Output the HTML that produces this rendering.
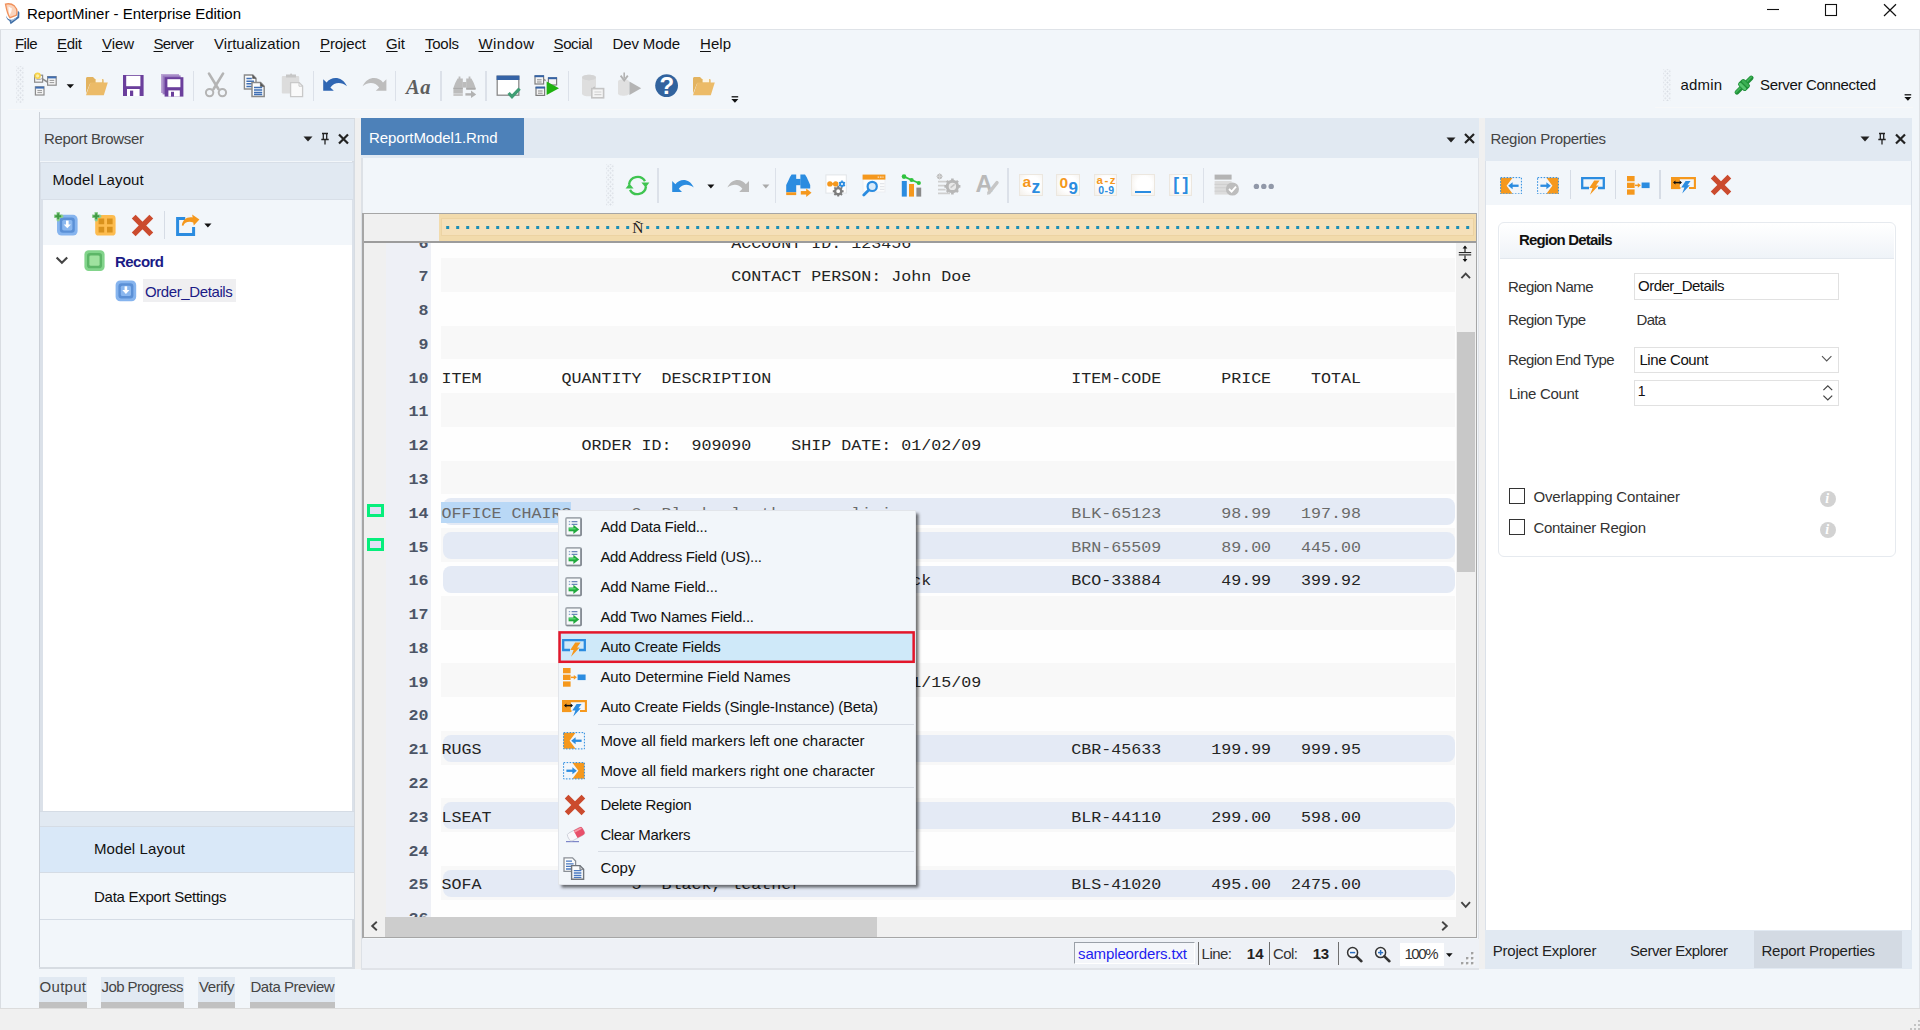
<!DOCTYPE html>
<html lang="en"><head><meta charset="utf-8"><title>ReportMiner - Enterprise Edition</title>
<style>
html,body{margin:0;padding:0;}
body{width:1920px;height:1030px;overflow:hidden;position:relative;background:#f2f6fa;font-family:"Liberation Sans",sans-serif;}
#app{position:absolute;left:0;top:0;width:1920px;height:1030px;overflow:hidden;}
#app div,#app span,#app svg{position:absolute;box-sizing:border-box;}
.t{white-space:pre;line-height:1;}
.m{font-family:"Liberation Mono",monospace;}
.s{font-family:"Liberation Serif",serif;}
u{text-decoration:underline;text-underline-offset:2px;text-decoration-thickness:1.3px;}
</style></head><body><div id="app">
<div style="left:0px;top:0px;width:1920px;height:29px;background:#ffffff;"></div>
<div style="left:0px;top:29px;width:1920px;height:1px;background:#dfe3e8;"></div>
<span class="t" style="left:27.00px;top:6.00px;font-size:15px;color:#000;letter-spacing:-0.008px;">ReportMiner - Enterprise Edition</span>
<svg style="left:1760px;top:0px;" width="150" height="29" viewBox="0 0 150 29"><path d="M7 9.5H19" stroke="#111" stroke-width="1.1" fill="none"/><rect x="65.5" y="4.5" width="11" height="11" stroke="#111" stroke-width="1.1" fill="none"/><path d="M124 4.2L136 16M136 4.2L124 16" stroke="#111" stroke-width="1.2" fill="none"/></svg>
<div style="left:1919px;top:30px;width:1px;height:1000px;background:#dfe2e6;"></div>
<div style="left:0px;top:30px;width:1px;height:1000px;background:#d9dde2;"></div>
<span class="t" style="left:15.00px;top:35.70px;font-size:15px;color:#111;letter-spacing:-0.557px;"><u>F</u>ile</span>
<span class="t" style="left:57.00px;top:35.70px;font-size:15px;color:#111;letter-spacing:-0.283px;"><u>E</u>dit</span>
<span class="t" style="left:102.00px;top:35.70px;font-size:15px;color:#111;letter-spacing:-0.081px;"><u>V</u>iew</span>
<span class="t" style="left:153.50px;top:35.70px;font-size:15px;color:#111;letter-spacing:-0.736px;"><u>S</u>erver</span>
<span class="t" style="left:214.00px;top:35.70px;font-size:15px;color:#111;letter-spacing:0.030px;">Vi<u>r</u>tualization</span>
<span class="t" style="left:320.00px;top:35.70px;font-size:15px;color:#111;letter-spacing:-0.114px;"><u>P</u>roject</span>
<span class="t" style="left:386.00px;top:35.70px;font-size:15px;color:#111;letter-spacing:-0.084px;"><u>G</u>it</span>
<span class="t" style="left:425.00px;top:35.70px;font-size:15px;color:#111;letter-spacing:-0.254px;"><u>T</u>ools</span>
<span class="t" style="left:478.50px;top:35.70px;font-size:15px;color:#111;letter-spacing:0.430px;"><u>W</u>indow</span>
<span class="t" style="left:553.50px;top:35.70px;font-size:15px;color:#111;letter-spacing:-0.371px;"><u>S</u>ocial</span>
<span class="t" style="left:612.50px;top:35.70px;font-size:15px;color:#111;letter-spacing:-0.124px;">Dev Mode</span>
<span class="t" style="left:700.00px;top:35.70px;font-size:15px;color:#111;letter-spacing:0.050px;"><u>H</u>elp</span>
<div style="left:8px;top:109px;width:732px;height:1px;background:#f7f8f9;"></div>
<div style="left:1655px;top:107px;width:258px;height:1px;background:#f7f8f9;"></div>
<div style="left:16px;top:66px;width:7.5px;height:37px;background-image:radial-gradient(circle,#d9dde4 0.75px,transparent 1.05px),radial-gradient(circle,#d9dde4 0.75px,transparent 1.05px);background-size:4.5px 4.5px;background-position:0 0,2.25px 2.25px;"></div>
<div style="left:1663px;top:69px;width:7.5px;height:32px;background-image:radial-gradient(circle,#d9dde4 0.75px,transparent 1.05px),radial-gradient(circle,#d9dde4 0.75px,transparent 1.05px);background-size:4.5px 4.5px;background-position:0 0,2.25px 2.25px;"></div>
<div style="left:192.5px;top:70.5px;width:1.5px;height:30px;background:#dce1e9;"></div>
<div style="left:312.5px;top:70.5px;width:1.5px;height:30px;background:#dce1e9;"></div>
<div style="left:394.5px;top:70.5px;width:1.5px;height:30px;background:#dce1e9;"></div>
<div style="left:440.0px;top:70.5px;width:1.5px;height:30px;background:#dce1e9;"></div>
<div style="left:485.0px;top:70.5px;width:1.5px;height:30px;background:#dce1e9;"></div>
<div style="left:567.5px;top:70.5px;width:1.5px;height:30px;background:#dce1e9;"></div>
<span class="t" style="left:1680.50px;top:76.70px;font-size:15px;color:#111;letter-spacing:0.161px;">admin</span>
<span class="t" style="left:1760.00px;top:76.70px;font-size:15px;color:#111;letter-spacing:-0.327px;">Server Connected</span>
<div style="left:39px;top:112px;width:1px;height:857px;background:#cbd0d7;"></div>
<div style="left:355px;top:118px;width:6px;height:851px;background:#f0f0f0;"></div>
<div style="left:1479px;top:118px;width:6px;height:851px;background:#f0f0f0;"></div>
<div style="left:40px;top:118px;width:315px;height:851px;background:#f2f6fa;"></div>
<div style="left:352.4px;top:118px;width:2.6px;height:851px;background:#d7dce2;"></div>
<div style="left:39px;top:967px;width:316px;height:2px;background:#d7dce2;"></div>
<div style="left:40px;top:118px;width:315px;height:1px;background:#d3d9e0;"></div>
<div style="left:40px;top:119px;width:314px;height:42px;background:#e1e9f2;"></div>
<span class="t" style="left:44.00px;top:131.00px;font-size:15px;color:#444;letter-spacing:-0.323px;">Report Browser</span>
<svg style="left:300px;top:128px;" width="54" height="22" viewBox="0 0 54 22"><path d="M3.5 8.5h9l-4.5 5z" fill="#222"/><path d="M22 5.5h6M23.3 5.5v6M26.7 5.5v6M21.3 11.5h7.4M25 11.5v5" stroke="#222" stroke-width="1.3" fill="none"/><path d="M39 6.5l9 9M48 6.5l-9 9" stroke="#222" stroke-width="2.2" fill="none"/></svg>
<div style="left:40px;top:162px;width:314px;height:38px;background:#e1e9f2;border:1px solid #d8dfe8;"></div>
<span class="t" style="left:52.50px;top:172.00px;font-size:15px;color:#111;letter-spacing:0.104px;">Model Layout</span>
<div style="left:42px;top:200px;width:310px;height:45px;background:#f2f6fa;"></div>
<div style="left:164px;top:211px;width:1.2px;height:28px;background:#d6dce5;"></div>
<div style="left:42px;top:245px;width:310px;height:566px;background:#ffffff;"></div>
<div style="left:40px;top:200px;width:2.5px;height:611px;background:#dbe1e9;"></div>
<div style="left:351.5px;top:200px;width:2.5px;height:611px;background:#dbe1e9;"></div>
<svg style="left:54px;top:252px;" width="16" height="16" viewBox="0 0 16 16"><path d="M2.6 5.4l5.3 5.4 5.3-5.4" stroke="#444" stroke-width="2.1" fill="none"/></svg>
<span class="t" style="left:115.00px;top:253.50px;font-size:15px;color:#1b1b86;font-weight:bold;letter-spacing:-0.536px;">Record</span>
<div style="left:142.5px;top:279px;width:93px;height:22.5px;background:#efeff1;"></div>
<span class="t" style="left:145.00px;top:283.80px;font-size:15px;color:#1b1b86;letter-spacing:-0.395px;">Order_Details</span>
<div style="left:40px;top:811px;width:314px;height:15px;background:#e1e9f2;border-top:1.5px solid #d5dce5;"></div>
<div style="left:40px;top:825.5px;width:314px;height:47px;background:#d9e8f8;border-top:1px solid #d5dce5;border-bottom:1px solid #d5dce5;"></div>
<span class="t" style="left:94.00px;top:841.00px;font-size:15px;color:#111;letter-spacing:0.085px;">Model Layout</span>
<div style="left:40px;top:872.5px;width:314px;height:47.5px;background:#f2f6fa;border-bottom:1px solid #d5dce5;"></div>
<span class="t" style="left:94.00px;top:888.70px;font-size:15px;color:#111;letter-spacing:-0.267px;">Data Export Settings</span>
<div style="left:39.0px;top:977px;width:47.6px;height:24.5px;background:#e1e9f2;"></div>
<div style="left:39.0px;top:1001.5px;width:47.6px;height:6.5px;background:#c1c1c1;"></div>
<span class="t" style="left:39.60px;top:979.00px;font-size:15px;color:#444;letter-spacing:0.274px;">Output</span>
<div style="left:100.9px;top:977px;width:83.2px;height:24.5px;background:#e1e9f2;"></div>
<div style="left:100.9px;top:1001.5px;width:83.2px;height:6.5px;background:#c1c1c1;"></div>
<span class="t" style="left:101.50px;top:979.00px;font-size:15px;color:#444;letter-spacing:-0.580px;">Job Progress</span>
<div style="left:198.4px;top:977px;width:36.7px;height:24.5px;background:#e1e9f2;"></div>
<div style="left:198.4px;top:1001.5px;width:36.7px;height:6.5px;background:#c1c1c1;"></div>
<span class="t" style="left:199.00px;top:979.00px;font-size:15px;color:#444;letter-spacing:-0.403px;">Verify</span>
<div style="left:249.9px;top:977px;width:85.30000000000003px;height:24.5px;background:#e1e9f2;"></div>
<div style="left:249.9px;top:1001.5px;width:85.30000000000003px;height:6.5px;background:#c1c1c1;"></div>
<span class="t" style="left:250.50px;top:979.00px;font-size:15px;color:#444;letter-spacing:-0.464px;">Data Preview</span>
<div style="left:0px;top:1008px;width:1920px;height:1px;background:#dcdcdc;"></div>
<div style="left:0px;top:1009px;width:1920px;height:21px;background:#f0f0f0;"></div>
<svg style="left:1908px;top:1018px;" width="14" height="14" viewBox="0 0 14 14"><g fill="#c4c4c4"><rect x="10" y="10" width="2" height="2"/><rect x="6" y="10" width="2" height="2"/><rect x="10" y="6" width="2" height="2"/><rect x="2" y="10" width="2" height="2"/><rect x="6" y="6" width="2" height="2"/><rect x="10" y="2" width="2" height="2"/></g></svg>
<div style="left:361px;top:118px;width:1118px;height:851px;background:#f2f6fa;"></div>
<div style="left:361px;top:157px;width:2px;height:812px;background:#dde1e6;"></div>
<div style="left:1477.6px;top:157px;width:1.4px;height:812px;background:#e0e3e8;"></div>
<div style="left:361px;top:968px;width:1118px;height:1.6px;background:#e0e3e8;"></div>
<div style="left:361px;top:118px;width:1118px;height:40px;background:#e1e9f2;"></div>
<div style="left:361px;top:118px;width:163px;height:37px;background:#4d81b9;"></div>
<span class="t" style="left:369.00px;top:130.00px;font-size:15px;color:#ffffff;letter-spacing:-0.104px;">ReportModel1.Rmd</span>
<svg style="left:1442px;top:128px;" width="36" height="22" viewBox="0 0 36 22"><path d="M4.5 9.5h9l-4.5 5z" fill="#222"/><path d="M23 6l9 9M32 6l-9 9" stroke="#222" stroke-width="2.2" fill="none"/></svg>
<div style="left:606px;top:164px;width:7.5px;height:42px;background-image:radial-gradient(circle,#d9dde4 0.75px,transparent 1.05px),radial-gradient(circle,#d9dde4 0.75px,transparent 1.05px);background-size:4.5px 4.5px;background-position:0 0,2.25px 2.25px;"></div>
<div style="left:657.4px;top:168px;width:1.5px;height:34.5px;background:#dce1e9;"></div>
<div style="left:774.8px;top:168px;width:1.5px;height:34.5px;background:#dce1e9;"></div>
<div style="left:1007.4px;top:168px;width:1.5px;height:34.5px;background:#dce1e9;"></div>
<div style="left:1202.9px;top:168px;width:1.5px;height:34.5px;background:#dce1e9;"></div>
<div style="left:362px;top:213px;width:1115px;height:725px;background:#a6a6a6;"></div>
<div style="left:364px;top:214px;width:1112px;height:723px;background:#fdfdfd;"></div>
<div style="left:364px;top:243px;width:1092px;height:674px;overflow:hidden;background:#fefefe;">
<div style="left:0px;top:0px;width:22.3px;height:674px;background:#f0f0f0;"></div>
<div style="left:22.3px;top:0px;width:45px;height:674px;background:#eef0f6;"></div>
<div style="left:77.3px;top:-52.56px;width:1014px;height:33.78px;background:#f8f8f8;"></div>
<div style="left:77.3px;top:15.0px;width:1014px;height:33.78px;background:#f8f8f8;"></div>
<div style="left:77.3px;top:82.56px;width:1014px;height:33.78px;background:#f8f8f8;"></div>
<div style="left:77.3px;top:150.12px;width:1014px;height:33.78px;background:#f8f8f8;"></div>
<div style="left:77.3px;top:217.68px;width:1014px;height:33.78px;background:#f8f8f8;"></div>
<div style="left:77.3px;top:285.24px;width:1014px;height:33.78px;background:#f8f8f8;"></div>
<div style="left:77.3px;top:352.8px;width:1014px;height:33.78px;background:#f8f8f8;"></div>
<div style="left:77.3px;top:420.36px;width:1014px;height:33.78px;background:#f8f8f8;"></div>
<div style="left:77.3px;top:487.92px;width:1014px;height:33.78px;background:#f8f8f8;"></div>
<div style="left:77.3px;top:555.48px;width:1014px;height:33.78px;background:#f8f8f8;"></div>
<div style="left:77.3px;top:623.04px;width:1014px;height:33.78px;background:#f8f8f8;"></div>
<div style="left:78.5px;top:255.16px;width:1012px;height:27.3px;background:#e4eaf5;border-radius:8px;"></div>
<div style="left:78.5px;top:288.94px;width:1012px;height:27.3px;background:#e4eaf5;border-radius:8px;"></div>
<div style="left:78.5px;top:322.72px;width:1012px;height:27.3px;background:#e4eaf5;border-radius:8px;"></div>
<div style="left:78.5px;top:491.62px;width:1012px;height:27.3px;background:#e4eaf5;border-radius:8px;"></div>
<div style="left:78.5px;top:559.18px;width:1012px;height:27.3px;background:#e4eaf5;border-radius:8px;"></div>
<div style="left:78.5px;top:626.74px;width:1012px;height:27.3px;background:#e4eaf5;border-radius:8px;"></div>
<div style="left:77.3px;top:259.46px;width:129.7px;height:20.6px;background:#b9d8f6;"></div>
<span class="t m" style="left:54.50px;top:-7.51px;font-size:16.667px;color:#4c5566;font-weight:bold;transform:scaleY(0.9);transform-origin:0 76.65%;">6</span>
<span class="t m" style="left:77.50px;top:-7.51px;font-size:16.667px;color:#242424;transform:scaleY(0.9);transform-origin:0 76.65%;">                             ACCOUNT ID: 123456</span>
<span class="t m" style="left:54.50px;top:26.27px;font-size:16.667px;color:#4c5566;font-weight:bold;transform:scaleY(0.9);transform-origin:0 76.65%;">7</span>
<span class="t m" style="left:77.50px;top:26.27px;font-size:16.667px;color:#242424;transform:scaleY(0.9);transform-origin:0 76.65%;">                             CONTACT PERSON: John Doe</span>
<span class="t m" style="left:54.50px;top:60.05px;font-size:16.667px;color:#4c5566;font-weight:bold;transform:scaleY(0.9);transform-origin:0 76.65%;">8</span>
<span class="t m" style="left:54.50px;top:93.83px;font-size:16.667px;color:#4c5566;font-weight:bold;transform:scaleY(0.9);transform-origin:0 76.65%;">9</span>
<span class="t m" style="left:44.50px;top:127.61px;font-size:16.667px;color:#4c5566;font-weight:bold;transform:scaleY(0.9);transform-origin:0 76.65%;">10</span>
<span class="t m" style="left:77.50px;top:127.61px;font-size:16.667px;color:#242424;transform:scaleY(0.9);transform-origin:0 76.65%;">ITEM        QUANTITY  DESCRIPTION                              ITEM-CODE      PRICE    TOTAL</span>
<span class="t m" style="left:44.50px;top:161.39px;font-size:16.667px;color:#4c5566;font-weight:bold;transform:scaleY(0.9);transform-origin:0 76.65%;">11</span>
<span class="t m" style="left:44.50px;top:195.17px;font-size:16.667px;color:#4c5566;font-weight:bold;transform:scaleY(0.9);transform-origin:0 76.65%;">12</span>
<span class="t m" style="left:77.50px;top:195.17px;font-size:16.667px;color:#242424;transform:scaleY(0.9);transform-origin:0 76.65%;">              ORDER ID:  909090    SHIP DATE: 01/02/09</span>
<span class="t m" style="left:44.50px;top:228.95px;font-size:16.667px;color:#4c5566;font-weight:bold;transform:scaleY(0.9);transform-origin:0 76.65%;">13</span>
<span class="t m" style="left:44.50px;top:262.73px;font-size:16.667px;color:#4c5566;font-weight:bold;transform:scaleY(0.9);transform-origin:0 76.65%;">14</span>
<span class="t m" style="left:77.50px;top:262.73px;font-size:16.667px;color:#6a6a6a;transform:scaleY(0.9);transform-origin:0 76.65%;">OFFICE CHAIRS      2  Black, leather, reclining                BLK-65123      98.99   197.98</span>
<span class="t m" style="left:44.50px;top:296.51px;font-size:16.667px;color:#4c5566;font-weight:bold;transform:scaleY(0.9);transform-origin:0 76.65%;">15</span>
<span class="t m" style="left:77.50px;top:296.51px;font-size:16.667px;color:#6a6a6a;transform:scaleY(0.9);transform-origin:0 76.65%;">                   5  Brown, oak, round                        BRN-65509      89.00   445.00</span>
<span class="t m" style="left:44.50px;top:330.29px;font-size:16.667px;color:#4c5566;font-weight:bold;transform:scaleY(0.9);transform-origin:0 76.65%;">16</span>
<span class="t m" style="left:77.50px;top:330.29px;font-size:16.667px;color:#242424;transform:scaleY(0.9);transform-origin:0 76.65%;">                   8  Cherry, oak, 5 shelf, black              BCO-33884      49.99   399.92</span>
<span class="t m" style="left:44.50px;top:364.07px;font-size:16.667px;color:#4c5566;font-weight:bold;transform:scaleY(0.9);transform-origin:0 76.65%;">17</span>
<span class="t m" style="left:44.50px;top:397.85px;font-size:16.667px;color:#4c5566;font-weight:bold;transform:scaleY(0.9);transform-origin:0 76.65%;">18</span>
<span class="t m" style="left:44.50px;top:431.63px;font-size:16.667px;color:#4c5566;font-weight:bold;transform:scaleY(0.9);transform-origin:0 76.65%;">19</span>
<span class="t m" style="left:77.50px;top:431.63px;font-size:16.667px;color:#242424;transform:scaleY(0.9);transform-origin:0 76.65%;">              ORDER ID:  909091    SHIP DATE: 01/15/09</span>
<span class="t m" style="left:44.50px;top:465.41px;font-size:16.667px;color:#4c5566;font-weight:bold;transform:scaleY(0.9);transform-origin:0 76.65%;">20</span>
<span class="t m" style="left:44.50px;top:499.19px;font-size:16.667px;color:#4c5566;font-weight:bold;transform:scaleY(0.9);transform-origin:0 76.65%;">21</span>
<span class="t m" style="left:77.50px;top:499.19px;font-size:16.667px;color:#242424;transform:scaleY(0.9);transform-origin:0 76.65%;">RUGS               5  Persian, red, 8x10                       CBR-45633     199.99   999.95</span>
<span class="t m" style="left:44.50px;top:532.97px;font-size:16.667px;color:#4c5566;font-weight:bold;transform:scaleY(0.9);transform-origin:0 76.65%;">22</span>
<span class="t m" style="left:44.50px;top:566.75px;font-size:16.667px;color:#4c5566;font-weight:bold;transform:scaleY(0.9);transform-origin:0 76.65%;">23</span>
<span class="t m" style="left:77.50px;top:566.75px;font-size:16.667px;color:#242424;transform:scaleY(0.9);transform-origin:0 76.65%;">LSEAT              2  Black, leather                           BLR-44110     299.00   598.00</span>
<span class="t m" style="left:44.50px;top:600.53px;font-size:16.667px;color:#4c5566;font-weight:bold;transform:scaleY(0.9);transform-origin:0 76.65%;">24</span>
<span class="t m" style="left:44.50px;top:634.31px;font-size:16.667px;color:#4c5566;font-weight:bold;transform:scaleY(0.9);transform-origin:0 76.65%;">25</span>
<span class="t m" style="left:77.50px;top:634.31px;font-size:16.667px;color:#242424;transform:scaleY(0.9);transform-origin:0 76.65%;">SOFA               5  Black, leather                           BLS-41020     495.00  2475.00</span>
<span class="t m" style="left:44.50px;top:668.09px;font-size:16.667px;color:#4c5566;font-weight:bold;transform:scaleY(0.9);transform-origin:0 76.65%;">26</span>
<div style="left:3.4px;top:261.46px;width:16.5px;height:12.5px;background:#e2e0f4;border:3px solid #06ee7c;"></div>
<div style="left:3.4px;top:295.24px;width:16.5px;height:12.5px;background:#e2e0f4;border:3px solid #06ee7c;"></div>
</div>
<div style="left:364px;top:214px;width:75px;height:27px;background:#f0f0f0;"></div>
<div style="left:439px;top:214px;width:1037px;height:27px;background:#f2dbac;"></div>
<div style="left:441px;top:218px;width:1033px;height:18px;background:#f5e0b9;border:1px solid #ecd3a3;background-image:linear-gradient(90deg,#1c8db5 0,#1c8db5 2.6px,transparent 2.6px);background-size:10px 2.5px;background-repeat:repeat-x;background-position:4.2px 7.2px;"></div>
<div style="left:631.5px;top:222px;width:12.5px;height:13px;background:#f5e0b9;"></div>
<span class="t s" style="left:632.20px;top:219.65px;font-size:15.5px;color:#222;">Ñ</span>
<div style="left:364px;top:241px;width:1112px;height:2px;background:#9c9c9c;"></div>
<div style="left:1456px;top:243px;width:20px;height:674px;background:#f0f0f0;"></div>
<div style="left:1457px;top:332px;width:17.5px;height:239.5px;background:#c8c8c8;"></div>
<div style="left:364px;top:917px;width:1112px;height:20px;background:#f0f0f0;"></div>
<div style="left:385.3px;top:917px;width:492px;height:20px;background:#cdcdcd;"></div>
<svg style="left:1457px;top:244px;" width="18" height="40" viewBox="0 0 18 40"><path d="M1.8 8.6h12.4M1.8 10.9h12.4" stroke="#111" stroke-width="1" fill="none"/><path d="M8 2.5v5.6M8 11.4v5.6" stroke="#111" stroke-width="1.1" fill="none"/><path d="M5.6 4.6L8 1.6l2.4 3zM5.6 14.9L8 17.9l2.4-3z" fill="#111"/><path d="M4.4 34.2L8.7 29.6l4.3 4.6" stroke="#444" stroke-width="1.9" fill="none"/></svg>
<svg style="left:1457px;top:896px;" width="18" height="16" viewBox="0 0 18 16"><path d="M4.4 6.2L8.7 10.8l4.3-4.6" stroke="#444" stroke-width="1.9" fill="none"/></svg>
<svg style="left:366px;top:918px;" width="16" height="16" viewBox="0 0 16 16"><path d="M10.8 3.8L6.2 8l4.6 4.2" stroke="#444" stroke-width="1.9" fill="none"/></svg>
<svg style="left:1437px;top:918px;" width="16" height="16" viewBox="0 0 16 16"><path d="M5.2 3.8L9.8 8l-4.6 4.2" stroke="#444" stroke-width="1.9" fill="none"/></svg>
<div style="left:362px;top:938.5px;width:1117px;height:29.5px;background:#eef1f6;"></div>
<div style="left:1073.7px;top:942px;width:121.5px;height:21.5px;background:#f4f6fa;border-top:1.5px solid #9aa0a8;border-left:1.5px solid #9aa0a8;border-right:1px solid #fff;border-bottom:1px solid #fff;"></div>
<span class="t" style="left:1078.00px;top:946.00px;font-size:15px;color:#1c1cf0;letter-spacing:-0.125px;">sampleorders.txt</span>
<div style="left:1197.6px;top:942px;width:1.3px;height:22.5px;background:#6f6f6f;"></div>
<span class="t" style="left:1201.60px;top:946.00px;font-size:15px;color:#333;letter-spacing:-0.532px;">Line:</span>
<span class="t" style="left:1246.75px;top:946.00px;font-size:15px;color:#222;font-weight:bold;letter-spacing:0.065px;">14</span>
<div style="left:1268.6px;top:942px;width:1.3px;height:22.5px;background:#6f6f6f;"></div>
<span class="t" style="left:1273.00px;top:946.00px;font-size:15px;color:#333;letter-spacing:-0.558px;">Col:</span>
<span class="t" style="left:1312.75px;top:946.00px;font-size:15px;color:#222;font-weight:bold;letter-spacing:-0.435px;">13</span>
<div style="left:1337.6px;top:942px;width:1.3px;height:22.5px;background:#6f6f6f;"></div>
<div style="left:1399.8px;top:943px;width:44px;height:22.5px;background:#ffffff;"></div>
<span class="t" style="left:1404.40px;top:946.00px;font-size:15px;color:#333;letter-spacing:-1.422px;">100%</span>
<svg style="left:1345.5px;top:946px;" width="18" height="18" viewBox="0 0 18 18"><circle cx="6.6" cy="6.6" r="5" stroke="#333" stroke-width="1.5" fill="#f6f8fb"/><path d="M10.4 10.4L15.4 15.2" stroke="#333" stroke-width="2.6" stroke-linecap="round"/><path d="M4 6.6h5.2" stroke="#2b6fc0" stroke-width="1.5"/></svg>
<svg style="left:1374px;top:946px;" width="18" height="18" viewBox="0 0 18 18"><circle cx="6.6" cy="6.6" r="5" stroke="#333" stroke-width="1.5" fill="#f6f8fb"/><path d="M10.4 10.4L15.4 15.2" stroke="#333" stroke-width="2.6" stroke-linecap="round"/><path d="M4 6.6h5.2" stroke="#2b6fc0" stroke-width="1.5"/><path d="M6.6 4v5.2" stroke="#2b6fc0" stroke-width="1.5"/></svg>
<svg style="left:1445px;top:951px;" width="9" height="8" viewBox="0 0 9 8"><path d="M1 2.2h6.6L4.3 6z" fill="#111"/></svg>
<svg style="left:1460px;top:949.8px;" width="16" height="16" viewBox="0 0 16 16"><rect x="12" y="3" width="2.4" height="2.4" fill="#ffffff"/><rect x="11" y="2" width="2.4" height="2.4" fill="#a2a2a2"/><rect x="7" y="8" width="2.4" height="2.4" fill="#ffffff"/><rect x="6" y="7" width="2.4" height="2.4" fill="#a2a2a2"/><rect x="12" y="8" width="2.4" height="2.4" fill="#ffffff"/><rect x="11" y="7" width="2.4" height="2.4" fill="#a2a2a2"/><rect x="2" y="13" width="2.4" height="2.4" fill="#ffffff"/><rect x="1" y="12" width="2.4" height="2.4" fill="#a2a2a2"/><rect x="7" y="13" width="2.4" height="2.4" fill="#ffffff"/><rect x="6" y="12" width="2.4" height="2.4" fill="#a2a2a2"/><rect x="12" y="13" width="2.4" height="2.4" fill="#ffffff"/><rect x="11" y="12" width="2.4" height="2.4" fill="#a2a2a2"/></svg>
<div style="left:1485px;top:118px;width:427px;height:851px;background:#ffffff;border:1px solid #dbe1e9;"></div>
<div style="left:1485px;top:118px;width:427px;height:43px;background:#e1e9f2;"></div>
<span class="t" style="left:1490.50px;top:131.00px;font-size:15px;color:#444;letter-spacing:-0.286px;">Region Properties</span>
<svg style="left:1857px;top:128px;" width="54" height="22" viewBox="0 0 54 22"><path d="M3.5 8.5h9l-4.5 5z" fill="#222"/><path d="M22 5.5h6M23.3 5.5v6M26.7 5.5v6M21.3 11.5h7.4M25 11.5v5" stroke="#222" stroke-width="1.3" fill="none"/><path d="M39 6.5l9 9M48 6.5l-9 9" stroke="#222" stroke-width="2.2" fill="none"/></svg>
<div style="left:1486px;top:161px;width:425px;height:44px;background:#f2f6fa;"></div>
<div style="left:1569.9px;top:170px;width:1.4px;height:29px;background:#d6dce5;"></div>
<div style="left:1614.9px;top:170px;width:1.4px;height:29px;background:#d6dce5;"></div>
<div style="left:1659.4px;top:170px;width:1.4px;height:29px;background:#d6dce5;"></div>
<div style="left:1498px;top:222px;width:397.5px;height:335.3px;background:#ffffff;border:1.3px solid #e6eaef;border-radius:6px;"></div>
<div style="left:1499.8px;top:223.6px;width:394.4px;height:35px;background:linear-gradient(#ffffff,#eff3f8);border-bottom:1.3px solid #e3e8ee;border-radius:5px 5px 0 0;"></div>
<span class="t" style="left:1519.00px;top:232.00px;font-size:15px;color:#111;font-weight:bold;letter-spacing:-0.822px;">Region Details</span>
<span class="t" style="left:1508.00px;top:278.70px;font-size:15px;color:#333;letter-spacing:-0.622px;">Region Name</span>
<div style="left:1634px;top:273.3px;width:205px;height:26.6px;background:#ffffff;border:1.3px solid #e1e1e1;"></div>
<span class="t" style="left:1638.00px;top:277.50px;font-size:15px;color:#111;letter-spacing:-0.503px;">Order_Details</span>
<span class="t" style="left:1508.00px;top:311.50px;font-size:15px;color:#333;letter-spacing:-0.595px;">Region Type</span>
<span class="t" style="left:1636.60px;top:311.50px;font-size:15px;color:#333;letter-spacing:-0.762px;">Data</span>
<span class="t" style="left:1508.00px;top:352.30px;font-size:15px;color:#333;letter-spacing:-0.586px;">Region End Type</span>
<div style="left:1634px;top:347px;width:205px;height:25.6px;background:#ffffff;border:1.3px solid #e1e1e1;"></div>
<span class="t" style="left:1639.40px;top:352.30px;font-size:15px;color:#111;letter-spacing:-0.395px;">Line Count</span>
<svg style="left:1819px;top:352px;" width="16" height="14" viewBox="0 0 16 14"><path d="M3 4.2l4.7 4.7 4.7-4.7" stroke="#555" stroke-width="1.1" fill="none"/></svg>
<span class="t" style="left:1509.00px;top:385.60px;font-size:15px;color:#333;letter-spacing:-0.328px;">Line Count</span>
<div style="left:1634px;top:379.7px;width:205px;height:26.2px;background:#ffffff;border:1.3px solid #e1e1e1;"></div>
<span class="t" style="left:1637.80px;top:383.60px;font-size:14px;color:#111;">1</span>
<svg style="left:1820px;top:382px;" width="16" height="22" viewBox="0 0 16 22"><path d="M3.4 8.2l4.4-4.4 4.4 4.4M3.4 13.6l4.4 4.4 4.4-4.4" stroke="#444" stroke-width="1.2" fill="none"/></svg>
<div style="left:1508.6px;top:488px;width:16.6px;height:16.2px;background:#ffffff;border:1.6px solid #333;"></div>
<span class="t" style="left:1533.40px;top:489.00px;font-size:15px;color:#333;letter-spacing:-0.175px;">Overlapping Container</span>
<div style="left:1508.6px;top:519px;width:16.6px;height:16.2px;background:#ffffff;border:1.6px solid #333;"></div>
<span class="t" style="left:1533.40px;top:520.00px;font-size:15px;color:#333;letter-spacing:-0.276px;">Container Region</span>
<div style="left:1820px;top:490.7px;width:16px;height:16px;background:#d2d2d2;border-radius:8px;"></div>
<span class="t s" style="left:1825.20px;top:491.80px;font-size:14px;color:#ffffff;font-weight:bold;font-style:italic;">i</span>
<div style="left:1820px;top:522px;width:16px;height:16px;background:#d2d2d2;border-radius:8px;"></div>
<span class="t s" style="left:1825.20px;top:523.10px;font-size:14px;color:#ffffff;font-weight:bold;font-style:italic;">i</span>
<div style="left:1485px;top:929.5px;width:427px;height:39.5px;background:#e1e9f2;"></div>
<div style="left:1754px;top:931px;width:147.5px;height:37px;background:#d3dae3;"></div>
<span class="t" style="left:1492.70px;top:943.00px;font-size:15px;color:#222;letter-spacing:-0.194px;">Project Explorer</span>
<span class="t" style="left:1630.00px;top:943.00px;font-size:15px;color:#222;letter-spacing:-0.443px;">Server Explorer</span>
<span class="t" style="left:1761.50px;top:943.00px;font-size:15px;color:#222;letter-spacing:-0.254px;">Report Properties</span>
<svg style="left:4.4px;top:2.6px;" width="18" height="23" viewBox="0 0 18 23"><path d="M2 12.4C3 16 6 17.4 9 16.4L13.4 13.8L13.8 7.4L15.4 9.4L15.2 14.8L6.6 21.2L5.4 17.8C3.4 16.8 2.2 14.6 2 12.4Z" fill="#3e6ea6"/><path d="M1.5 1.1C4.2 0.5 8 0.9 10.5 3.1C13 5.5 13.5 9 12.3 12.3L6 14.7C4.4 13 2.6 7 1.5 1.1Z" fill="#fad3bb" stroke="#f0905a" stroke-width="1.3"/><path d="M4.4 3.6L8 5.6L7.4 8.6L5.6 12.4C4.8 9.6 4.4 6.6 4.4 3.6Z" fill="#ffffff" opacity="0.85"/><path d="M6.8 18.4L11.6 15.2" stroke="#a9c0dc" stroke-width="1.1"/></svg>
<svg style="left:33px;top:72px;" width="25" height="25" viewBox="0 0 25 25"><rect x="1.6" y="3.2" width="8" height="7" fill="#f4f4f4" stroke="#8c8c8c" stroke-width="1.2"/><rect x="14.6" y="4.6" width="8.6" height="8.6" fill="#f4f4f4" stroke="#8c8c8c" stroke-width="1.2"/><path d="M14.6 5.4h8.6" stroke="#3f6fb5" stroke-width="2"/><rect x="2.4" y="14.8" width="8.6" height="8.2" fill="#f4f4f4" stroke="#8c8c8c" stroke-width="1.2"/><path d="M2.4 15.6h8.6" stroke="#3f6fb5" stroke-width="2"/><path d="M16.6 8.4h4.6M16.6 10.6h4.6M4.4 18.6h4.6M4.4 20.6h4.6M3.4 7.2h4.4" stroke="#9a9a9a" stroke-width="1"/><path d="M8.6 6.4L14.4 10" stroke="#8c8c8c" stroke-width="1.6"/><circle cx="4.6" cy="3.8" r="3.2" fill="#f7d34a"/><circle cx="4.6" cy="3.8" r="1.6" fill="#fdf0a8"/></svg>
<svg style="left:66px;top:83px;" width="9" height="7" viewBox="0 0 9 7"><path d="M0.6 1.2h7.4L4.3 5.2z" fill="#111"/></svg>
<svg style="left:84.5px;top:73.5px;" width="24" height="23" viewBox="0 0 24 23"><path d="M1 4.6C1 3.6 1.6 3 2.6 3H8L10 5H17.4C18.2 5 18.6 5.4 18.6 6.2V9H5.2L1 19.6Z" fill="#e3b35f"/><path d="M10.6 4.8h6.6v3.8h-6.6z" fill="#fdf6e6"/><path d="M5.4 8.6H22.8L18.8 21.2H1Z" fill="#ecbb68"/></svg>
<svg style="left:691.5px;top:73.5px;" width="24" height="23" viewBox="0 0 24 23"><path d="M1 4.6C1 3.6 1.6 3 2.6 3H8L10 5H17.4C18.2 5 18.6 5.4 18.6 6.2V9H5.2L1 19.6Z" fill="#e3b35f"/><path d="M10.6 4.8h6.6v3.8h-6.6z" fill="#fdf6e6"/><path d="M5.4 8.6H22.8L18.8 21.2H1Z" fill="#ecbb68"/></svg>
<svg style="left:122px;top:73.5px;" width="23" height="23" viewBox="0 0 23 23"><path d="M1 1H21.6V22H1Z" fill="#6b3f9c"/><rect x="4.2" y="1.8" width="14.2" height="10.4" fill="#ffffff"/><rect x="5" y="15" width="12.6" height="7" fill="#ffffff"/><rect x="8" y="16.6" width="3.2" height="5.4" fill="#6b3f9c"/></svg>
<svg style="left:159.5px;top:72.5px;" width="25" height="25" viewBox="0 0 25 25"><path d="M1 1H19V20H1Z" fill="#b9a3d3"/><path d="M2.6 2.4H20.6V21.4H2.6Z" fill="#9a7cc0"/><path d="M4.6 4.2H23.4V23.6H4.6Z" fill="#6b3f9c"/><rect x="7.4" y="6.2" width="13" height="8" fill="#ffffff"/><rect x="8.4" y="17.4" width="11.4" height="6.2" fill="#ffffff"/><rect x="11" y="18.8" width="3" height="4.8" fill="#6b3f9c"/></svg>
<svg style="left:204px;top:72px;" width="24" height="26" viewBox="0 0 24 26"><path d="M5 1.6L14.4 17M19 1.6L9.6 17" stroke="#b4b4b4" stroke-width="2.6" fill="none" stroke-linecap="round"/><circle cx="5.6" cy="20.6" r="3.7" stroke="#b4b4b4" stroke-width="2" fill="none"/><circle cx="18.4" cy="20.6" r="3.7" stroke="#b4b4b4" stroke-width="2" fill="none"/></svg>
<svg style="left:242.5px;top:73.5px;" width="23" height="24" viewBox="0 0 23 24"><path d="M1.4 1H9.8L13 4.2V15H1.4Z" fill="#fbfcfd" stroke="#8a8a8a" stroke-width="1.4"/><path d="M9.6 1V4.4H13" fill="#555" stroke="#555" stroke-width="0.6"/><path d="M3.4 4.6h5.4M3.4 7.2h7.6M3.4 9.8h7.6M3.4 12.4h7.6" stroke="#3f6fb5" stroke-width="1.5"/><path d="M9 8.6H17.6L21.2 12.2V22.6H9Z" fill="#fbfcfd" stroke="#8a8a8a" stroke-width="1.5"/><path d="M17.4 8.6V12.4H21.2" fill="#555" stroke="#555" stroke-width="0.6"/><path d="M11 13.6h8.2M11 16h8.2M11 18.4h8.2M11 20.6h8.2" stroke="#3f6fb5" stroke-width="1.5"/></svg>
<svg style="left:280.5px;top:73px;" width="23" height="25" viewBox="0 0 23 25"><rect x="0.8" y="3" width="17.4" height="17.6" rx="1" fill="#dcdcdc"/><path d="M5 1.6H9L9.6 0.6H10.6L11.2 1.6H15V4.4H5Z" fill="#c6c6c6"/><path d="M9.6 9.6H18.2L21.6 13V23.6H9.6Z" fill="#fafafa" stroke="#c9c9c9" stroke-width="1.3"/><path d="M18 9.6V13.2H21.6" fill="none" stroke="#c9c9c9" stroke-width="1"/></svg>
<svg style="left:323.4px;top:76.8px;" width="25" height="15" viewBox="0 0 25 15"><path d="M0.2 2.2V13.8H10.8L7.4 10.4C11.5 5 18 4.5 24 9.2C19 -1.5 8 -0.5 3.6 5.4Z" fill="#2f66b3"/></svg>
<svg style="left:362px;top:76.8px;" width="25" height="15" viewBox="0 0 25 15"><g transform="translate(24.6 0) scale(-1 1)"><path d="M0.2 2.2V13.8H10.8L7.4 10.4C11.5 5 18 4.5 24 9.2C19 -1.5 8 -0.5 3.6 5.4Z" fill="#bdbdbd"/></g></svg>
<span class="t s" style="left:406.00px;top:76.75px;font-size:20.5px;color:#5e5e5e;font-weight:bold;font-style:italic;letter-spacing:0.676px;">Aa</span>
<svg style="left:452.5px;top:75.5px;" width="25" height="23" viewBox="0 0 25 23"><path d="M4.6 2.6H5.6V0.6H7.4V2.6H9.8V17.6H0.4V12L2.2 7Z" fill="#bcbcbc"/><path d="M13.2 2.6H15.6V0.6H17.4V2.6H18.4L20.8 7L22.6 12V14H13.2Z" fill="#bcbcbc"/><path d="M9.6 6h3.8v5.6H9.6z" fill="#bcbcbc"/><path d="M0.4 12.4h9.4M13.2 12.4h9.4" stroke="#a9a9a9" stroke-width="1"/><path d="M0.4 17.6h9.4v2.4H0.4z" fill="#c8c8c8"/><path d="M12.4 18.4H19" stroke="#b2b2b2" stroke-width="2.4"/><path d="M18 14.6L23.2 18.4L18 22Z" fill="#b2b2b2"/></svg>
<svg style="left:495.5px;top:74.5px;" width="26" height="24" viewBox="0 0 26 24"><rect x="1.2" y="1.2" width="21.6" height="19" fill="#ffffff" stroke="#8a8a8a" stroke-width="1.3"/><rect x="0.6" y="0.6" width="22.8" height="4.4" fill="#3563a6"/><path d="M12.6 18L16 21.6L23.6 13.6" stroke="#3f9d74" stroke-width="3.2" fill="none"/></svg>
<svg style="left:533.5px;top:74.5px;" width="26" height="22" viewBox="0 0 26 22"><rect x="1" y="1" width="8.6" height="8" fill="#f4f4f4" stroke="#7c7c7c" stroke-width="1.2"/><path d="M0.6 1.2h9.4" stroke="#3563a6" stroke-width="2"/><rect x="14.4" y="3" width="8.2" height="7" fill="#f4f4f4" stroke="#7c7c7c" stroke-width="1.2"/><path d="M14 3.2h9" stroke="#3563a6" stroke-width="2"/><rect x="2" y="12.4" width="8.6" height="8" fill="#f4f4f4" stroke="#7c7c7c" stroke-width="1.2"/><path d="M1.6 12.6h9.4" stroke="#3563a6" stroke-width="2"/><path d="M3 4.8h4.6M3 7h4.6M4 16h4.6M4 18.2h4.6" stroke="#8a8a8a" stroke-width="1"/><path d="M9.6 4.2L11.6 5.6" stroke="#8a8a8a" stroke-width="1.4"/><path d="M12.6 6.6L25 13.2L12.6 20Z" fill="#1fb20f"/></svg>
<svg style="left:581px;top:73.5px;" width="24" height="25" viewBox="0 0 24 25"><path d="M1 3.6C1 -0.2 15 -0.2 15 3.6V19.4C15 23.2 1 23.2 1 19.4Z" fill="#dedede"/><ellipse cx="8" cy="3.6" rx="7" ry="2.8" fill="#d4d4d4"/><path d="M9.6 16.6L13.4 12.2L14.6 16.6Z" fill="#b8b8b8"/><rect x="10.8" y="14.6" width="11.8" height="9.2" fill="#f4f4f4" stroke="#c4c4c4" stroke-width="1.6"/><path d="M13.4 18h7M13.4 20.6h7" stroke="#cfcfcf" stroke-width="1.2"/></svg>
<svg style="left:616.5px;top:72px;" width="25" height="25" viewBox="0 0 25 25"><path d="M1 9.6C1 6.6 12 6.6 12 9.6V21.4C12 24.4 1 24.4 1 21.4Z" fill="#e0e0e0"/><path d="M7.2 0.6V6.4" stroke="#b2b2b2" stroke-width="1.6"/><path d="M3.6 3.6L7.2 8.4L10.8 3.6" stroke="#b2b2b2" stroke-width="1.8" fill="none"/><path d="M12.4 9.6L24.2 16.2L12.4 23Z" fill="#b4b4b4"/></svg>
<svg style="left:654.5px;top:73.5px;" width="24" height="24" viewBox="0 0 24 24"><circle cx="11.6" cy="11.6" r="11.4" fill="#32639e"/></svg>
<span class="t" style="left:659.40px;top:73.70px;font-size:24px;color:#ffffff;font-weight:bold;">?</span>
<svg style="left:730.6px;top:96px;" width="8" height="8" viewBox="0 0 8 8"><path d="M0.6 0.8h6.6" stroke="#111" stroke-width="1.3"/><path d="M0.4 3h7L3.9 6.8z" fill="#111"/></svg>
<svg style="left:1904.4px;top:94px;" width="8" height="8" viewBox="0 0 8 8"><path d="M0.6 0.8h6.6" stroke="#111" stroke-width="1.3"/><path d="M0.4 3h7L3.9 6.8z" fill="#111"/></svg>
<svg style="left:1732.8px;top:73.8px;" width="22" height="22" viewBox="0 0 22 22"><g transform="rotate(-45 11 11)"><rect x="-1.4" y="8.8" width="24.8" height="4.6" rx="2.2" fill="#1f8f38"/><rect x="-0.6" y="9.6" width="23.2" height="1.8" rx="0.9" fill="#3fb457"/><rect x="6.6" y="5.6" width="8.8" height="10.8" rx="2.4" fill="#1f8f38"/><rect x="7.4" y="6.4" width="3" height="9.2" rx="1.4" fill="#56c66e"/><rect x="11.6" y="6.4" width="3" height="9.2" rx="1.4" fill="#3aaf52"/></g></svg>
<svg style="left:54px;top:212px;" width="25" height="25" viewBox="0 0 25 25"><rect x="3" y="2.8" width="20.6" height="20.8" rx="4.6" fill="#86b4ee"/><rect x="5.8" y="5.6" width="15" height="15.2" rx="3" fill="#5b90d6"/><rect x="8.2" y="8.0" width="10.2" height="10.4" rx="1.6" fill="#8ab7ef"/><path d="M13.3 8.6v4.4" stroke="#ffffff" stroke-width="2.6"/><path d="M9.7 12.399999999999999h7.2l-3.6 3.9z" fill="#ffffff"/><path d="M4.2 0.6V7.8M0.6 4.2H7.8" stroke="#8fcf8f" stroke-width="3.4" stroke-linecap="round"/><path d="M4.2 1.2V7.2M1.2 4.2H7.2" stroke="#3f9a43" stroke-width="2"/></svg>
<svg style="left:91.5px;top:212px;" width="25" height="25" viewBox="0 0 25 25"><rect x="3.2" y="3" width="20.4" height="20.6" rx="3.4" fill="#fdbc4f"/><path d="M6.6 6.6h5.6v5.6H6.6zM15 6.6h5.6v5.6H15zM6.6 14.8h5.6v5.8H6.6zM15 14.8h5.6v5.8H15z" fill="#d9921d"/><path d="M4.2 0.6V7.8M0.6 4.2H7.8" stroke="#8fcf8f" stroke-width="3.4" stroke-linecap="round"/><path d="M4.2 1.2V7.2M1.2 4.2H7.2" stroke="#3f9a43" stroke-width="2"/></svg>
<svg style="left:131px;top:214px;" width="23" height="23" viewBox="0 0 23 23"><path d="M2.7 2.7L20.3 20.3M20.3 2.7L2.7 20.3" stroke="#cb4b2e" stroke-width="5.4" fill="none"/></svg>
<svg style="left:175px;top:212.5px;" width="26" height="24" viewBox="0 0 26 24"><path d="M10.2 5.6H2.6V21.4H18.6V14" stroke="#2b8ce0" stroke-width="3" fill="none"/><path d="M6.8 12.6C7.4 7 11.6 3.6 17.6 4.4L17.2 1.6L24.4 6.6L18.8 12.6L18.2 9.4C13.4 8 9.4 9.4 8.4 12.8Z" fill="#f5981d"/></svg>
<svg style="left:204.4px;top:223.4px;" width="8" height="6" viewBox="0 0 8 6"><path d="M0.3 0.6h7.2L3.9 4.6z" fill="#111"/></svg>
<svg style="left:83.5px;top:250px;" width="21" height="22" viewBox="0 0 21 22"><rect x="0.4" y="0.2" width="20.2" height="20.8" rx="4.2" fill="#82d48b"/><rect x="3" y="3" width="15" height="15.2" rx="2.8" fill="#5cb667"/><rect x="5.4" y="5.4" width="10.2" height="10.4" rx="1.4" fill="#9fe29f"/></svg>
<svg style="left:114.5px;top:279.6px;" width="22" height="22" viewBox="0 0 22 22"><rect x="0.6" y="0.5" width="20.6" height="20.8" rx="4.6" fill="#86b4ee"/><rect x="3.4" y="3.3" width="15" height="15.2" rx="3" fill="#5b90d6"/><rect x="5.8" y="5.7" width="10.2" height="10.4" rx="1.6" fill="#8ab7ef"/><path d="M10.9 6.3v4.4" stroke="#ffffff" stroke-width="2.6"/><path d="M7.3 10.1h7.2l-3.6 3.9z" fill="#ffffff"/></svg>
<svg style="left:1500px;top:176.5px;" width="22" height="17.5" viewBox="0 0 22 17.5"><path d="M0.6 0.8H12.6L6.6 8.75L12.6 16.7H0.6Z" fill="#f5981d"/><rect x="0.6" y="0.6" width="20.8" height="16.3" fill="none" stroke="#2b8ce0" stroke-width="1" stroke-dasharray="1.6 1.4"/><path d="M11 8.75H18.6" stroke="#2b8ce0" stroke-width="2.3" fill="none"/><path d="M8.2 8.75L12.6 5.2V12.3Z" fill="#2b8ce0"/></svg>
<svg style="left:1537px;top:176.5px;" width="22" height="17.5" viewBox="0 0 22 17.5"><path d="M21.4 0.8H9.4L15.4 8.75L9.4 16.7H21.4Z" fill="#f5981d"/><rect x="0.6" y="0.6" width="20.8" height="16.3" fill="none" stroke="#2b8ce0" stroke-width="1" stroke-dasharray="1.6 1.4"/><path d="M3.4 8.75H11" stroke="#2b8ce0" stroke-width="2.3" fill="none"/><path d="M13.8 8.75L9.4 5.2V12.3Z" fill="#2b8ce0"/></svg>
<svg style="left:1581px;top:176.8px;" width="24" height="18" viewBox="0 0 24 18"><path d="M8 11H1.2V1.2H22.8V11H17" stroke="#2b8ce0" stroke-width="2.3" fill="none"/><path d="M13.2 3.6H18.6L15 8.4H17.6L9 17.8L11.6 11H8.2Z" fill="#f5981d"/></svg>
<svg style="left:1627.3px;top:176px;" width="23" height="19" viewBox="0 0 23 19"><rect x="0" y="0" width="7.6" height="5.3" fill="#f5981d"/><rect x="0" y="6.7" width="7.6" height="5.3" fill="#f5981d"/><rect x="0" y="13.4" width="7.6" height="5.3" fill="#f5981d"/><path d="M8 9.35H11.4" stroke="#f5981d" stroke-width="1.5"/><path d="M10.8 6.9L13.9 9.35L10.8 11.8Z" fill="#f5981d"/><rect x="14.6" y="6.5" width="8" height="5.6" fill="#2b8ce0"/></svg>
<svg style="left:1671px;top:177.4px;" width="25" height="17" viewBox="0 0 25 17"><path d="M9.5 11H1.1V1.1H23.9V11H18" stroke="#f5981d" stroke-width="2.1" fill="none"/><rect x="0" y="0" width="8.8" height="12.1" fill="#f5981d"/><path d="M3 5.6H10" stroke="#111" stroke-width="1.5"/><path d="M2 5.6L4.4 3.6V7.6ZM11 5.6L8.6 3.6V7.6Z" fill="#111"/><path d="M14.6 4H19.6L16.4 8.2H18.8L11.2 16.4L13.4 10.4H10.2Z" fill="#2b8ce0"/></svg>
<svg style="left:1710px;top:174.4px;" width="22" height="22" viewBox="0 0 22 22"><path d="M2.6 2.6L19.4 19.4M19.4 2.6L2.6 19.4" stroke="#cb4b2e" stroke-width="5.2" fill="none"/></svg>
<svg style="left:624.5px;top:174.5px;" width="25" height="21" viewBox="0 0 25 21"><path d="M4 9.6A8.6 8.6 0 0 1 20 6.2" stroke="#3fc450" stroke-width="2.4" fill="none"/><path d="M21 11.4A8.6 8.6 0 0 1 5 14.8" stroke="#3fc450" stroke-width="2.4" fill="none"/><path d="M16.4 7.4H24.4L20.6 12.6Z" fill="#3fc450"/><path d="M8.6 13.6H0.6L4.4 8.4Z" fill="#3fc450"/></svg>
<svg style="left:672px;top:179px;" width="23" height="14" viewBox="0 0 23 14"><path d="M0.2 2V13H10L6.8 9.8C10.4 4.8 16.4 4.4 21.8 8.6C17.4 -1.4 7.4 -0.6 3.4 5.2Z" fill="#2b8ce0"/></svg>
<svg style="left:706.6px;top:183.6px;" width="8" height="6" viewBox="0 0 8 6"><path d="M0.4 0.6h7L3.9 4.6z" fill="#111"/></svg>
<svg style="left:727px;top:179px;" width="23" height="14" viewBox="0 0 23 14"><g transform="translate(22.2 0) scale(-1 1)"><path d="M0.2 2V13H10L6.8 9.8C10.4 4.8 16.4 4.4 21.8 8.6C17.4 -1.4 7.4 -0.6 3.4 5.2Z" fill="#b9b9b9"/></g></svg>
<svg style="left:761.8px;top:183.6px;" width="8" height="6" viewBox="0 0 8 6"><path d="M0.4 0.6h7L3.9 4.6z" fill="#a9a9a9"/></svg>
<svg style="left:786px;top:173.5px;" width="27" height="24" viewBox="0 0 27 24"><path d="M5.6 0.5H10.2V18.3H0.2V11L2.4 6.4L4 3Z" fill="#2b8ce0"/><path d="M14.4 0.5H19L20.6 3L22.2 6.4L24.2 11V14.4H14.4Z" fill="#2b8ce0"/><path d="M10 4.9h4.6v6.3H10z" fill="#2b8ce0"/><path d="M0.2 18.3h10v2.8h-10z" fill="#f5981d"/><path d="M14.8 18.8H21" stroke="#f5981d" stroke-width="3.5"/><path d="M20.2 14.4L25.5 18.8L20.2 23Z" fill="#f5981d"/></svg>
<svg style="left:824.5px;top:173.5px;" width="24" height="24" viewBox="0 0 24 24"><rect x="0.9" y="0.9" width="20.4" height="18.2" fill="#ffffff" stroke="#e1e4e8" stroke-width="1"/><circle cx="4.9" cy="9.9" r="2.7" fill="#f5981d"/><circle cx="10.7" cy="9.9" r="2.7" fill="#f5981d"/><path d="M4.9 9.9h5.8" stroke="#f5981d" stroke-width="1.6"/><circle cx="17" cy="10.1" r="1.9" fill="#ffffff" stroke="#2b8ce0" stroke-width="1.8"/><path d="M17 6.6v1.2M17 12.4v1.2M14 8.4l1.1 0.6M18.9 11.2l1.1 0.6M20 8.4l-1.1 0.6M15.1 11.2l-1.1 0.6" stroke="#2b8ce0" stroke-width="1.6"/><circle cx="13.2" cy="17.2" r="3.1" fill="#ffffff" stroke="#7d7d7d" stroke-width="2.4"/><path d="M13.2 11.8v2M13.2 20.6v2M7.8 17.2h2M16.6 17.2h2M9.4 13.4l1.4 1.4M15.6 19.6l1.4 1.4M17 13.4l-1.4 1.4M10.8 19.6l-1.4 1.4" stroke="#7d7d7d" stroke-width="1.9"/></svg>
<svg style="left:861.5px;top:174px;" width="25" height="23" viewBox="0 0 25 23"><rect x="1" y="1" width="22" height="17" fill="#fbfcfd" stroke="#eceef1" stroke-width="1"/><rect x="0.6" y="0.6" width="22.8" height="5" fill="#f5981d"/><path d="M15.6 3.1h6" stroke="#fde2bd" stroke-width="1.4" stroke-dasharray="1.6 0.8"/><path d="M18 9.6h4.4M18 12.6h4.4M18 15.4h4.4" stroke="#e4e6ea" stroke-width="1.1"/><circle cx="10.2" cy="12.4" r="4.6" fill="#d7eafa" stroke="#2b8ce0" stroke-width="2.2"/><path d="M6.8 16L1.8 21" stroke="#2b8ce0" stroke-width="2.8" stroke-linecap="round"/></svg>
<svg style="left:900.5px;top:173.5px;" width="22" height="24" viewBox="0 0 22 24"><rect x="0.8" y="7" width="5" height="15.6" fill="#2b8ce0"/><rect x="8" y="10" width="5" height="12.6" fill="#f5981d"/><rect x="15.4" y="13.6" width="4.8" height="9" fill="#8a8a8a"/><path d="M3 2.6L10.6 6L17.8 9" stroke="#2fc23e" stroke-width="1.8" fill="none"/><circle cx="3" cy="2.6" r="2.3" fill="#2fc23e"/><circle cx="10.6" cy="6" r="2.1" fill="#2fc23e"/><circle cx="17.8" cy="9" r="2.1" fill="#2fc23e"/></svg>
<svg style="left:935.5px;top:172.5px;" width="26" height="24" viewBox="0 0 26 24"><path d="M2 8.6h9M2 12.6h7.6M2 16.6h7.6M2 20.4h12" stroke="#cfcfcf" stroke-width="1.9"/><circle cx="16.4" cy="13.4" r="5.2" fill="#e9e9e9" stroke="#b7b7b7" stroke-width="3"/><path d="M16.4 5.4v2.2M16.4 19.2v2.2M8.4 13.4h2.2M22.2 13.4h2.2M10.8 7.8l1.6 1.6M20.4 17.4l1.6 1.6M22 7.8l-1.6 1.6M12.4 17.4l-1.6 1.6" stroke="#b7b7b7" stroke-width="2.6"/><path d="M14.6 14.6L18.6 11.4" stroke="#c4c4c4" stroke-width="1.6"/><circle cx="3.6" cy="3.4" r="2.6" fill="#bdbdbd"/><path d="M3.6 0v6.8M0.2 3.4H7" stroke="#d4d4d4" stroke-width="1"/></svg>
<span class="t" style="left:975.60px;top:172.30px;font-size:24px;color:#b9b9b9;font-weight:bold;">A</span>
<svg style="left:986px;top:180px;" width="14" height="16" viewBox="0 0 14 16"><path d="M3 12.6L11 2.6" stroke="#c6c6c6" stroke-width="3.4" stroke-linecap="round"/><path d="M1 15L1.8 11.6L4.2 13.4Z" fill="#c6c6c6"/></svg>
<div style="left:1019px;top:174px;width:23.6px;height:22.4px;background:radial-gradient(circle at 55% 45%,#ffffff 0,#ffffff 45%,#f3efe9 100%);border:1px solid #ece7df;"></div>
<div style="left:1056.2px;top:174px;width:23.6px;height:22.4px;background:radial-gradient(circle at 55% 45%,#ffffff 0,#ffffff 45%,#f3efe9 100%);border:1px solid #ece7df;"></div>
<div style="left:1093.8px;top:174px;width:23.6px;height:22.4px;background:radial-gradient(circle at 55% 45%,#ffffff 0,#ffffff 45%,#f3efe9 100%);border:1px solid #ece7df;"></div>
<div style="left:1131.3px;top:174px;width:23.6px;height:22.4px;background:radial-gradient(circle at 55% 45%,#ffffff 0,#ffffff 45%,#f3efe9 100%);border:1px solid #ece7df;"></div>
<div style="left:1168.8px;top:174px;width:23.6px;height:22.4px;background:radial-gradient(circle at 55% 45%,#ffffff 0,#ffffff 45%,#f3efe9 100%);border:1px solid #ece7df;"></div>
<span class="t" style="left:1022.60px;top:173.75px;font-size:15.5px;color:#f5981d;font-weight:bold;">a</span>
<span class="t" style="left:1031.60px;top:179.45px;font-size:17.5px;color:#2b8ce0;font-weight:bold;">z</span>
<span class="t" style="left:1059.40px;top:175.35px;font-size:15.5px;color:#f5981d;font-weight:bold;">0</span>
<span class="t" style="left:1068.60px;top:180.40px;font-size:17px;color:#2b8ce0;font-weight:bold;">9</span>
<span class="t" style="left:1096.60px;top:175.25px;font-size:11.5px;color:#f5981d;font-weight:bold;letter-spacing:1.412px;">a-z</span>
<span class="t" style="left:1098.20px;top:185.15px;font-size:10.5px;color:#2b8ce0;font-weight:bold;letter-spacing:0.412px;">0-9</span>
<div style="left:1135.2px;top:190.6px;width:16px;height:2.2px;background:#2b8ce0;"></div>
<span class="t" style="left:1173.20px;top:176.45px;font-size:17.5px;color:#2b8ce0;font-weight:bold;letter-spacing:-0.659px;">[ ]</span>
<svg style="left:1213.5px;top:173.5px;" width="27" height="23" viewBox="0 0 27 23"><rect x="0.6" y="0.6" width="17" height="5" fill="#b4b4b4"/><rect x="0.6" y="7" width="17" height="13.6" fill="#dcdcdc"/><path d="M0.6 10.4h17M0.6 13.8h17M0.6 17.2h17" stroke="#cdcdcd" stroke-width="0.9"/><circle cx="18.4" cy="15" r="6.6" fill="#bdbdbd"/><path d="M15 15L17.6 17.6L22 12.6" stroke="#ffffff" stroke-width="1.8" fill="none"/></svg>
<svg style="left:1252.5px;top:182.5px;" width="22" height="7" viewBox="0 0 22 7"><circle cx="3.4" cy="3.4" r="2.7" fill="#9198a8"/><circle cx="10.8" cy="3.4" r="2.7" fill="#9198a8"/><circle cx="18.2" cy="3.4" r="2.7" fill="#9198a8"/></svg>
<div style="left:558px;top:510.2px;width:357.8px;height:375.2px;background:#f2f6fa;border:1px solid #e2e5ea;box-shadow:2.5px 2.5px 3px rgba(0,0,0,0.58);"></div>
<svg style="left:557px;top:630px;" width="360" height="34" viewBox="0 0 360 34"><rect x="2.55" y="2.4" width="354.1" height="29.4" fill="#cfe9f9" stroke="#e3172b" stroke-width="2.5"/></svg>
<div style="left:598.3px;top:723.6999999999999px;width:316px;height:1.4px;background:#d8dde5;"></div>
<div style="left:598.3px;top:786.8px;width:316px;height:1.4px;background:#d8dde5;"></div>
<div style="left:598.3px;top:850.8px;width:316px;height:1.4px;background:#d8dde5;"></div>
<span class="t" style="left:600.40px;top:519.30px;font-size:15px;color:#111;letter-spacing:-0.277px;">Add Data Field...</span>
<span class="t" style="left:600.40px;top:549.30px;font-size:15px;color:#111;letter-spacing:-0.322px;">Add Address Field (US)...</span>
<span class="t" style="left:600.40px;top:579.30px;font-size:15px;color:#111;letter-spacing:-0.153px;">Add Name Field...</span>
<span class="t" style="left:600.40px;top:609.30px;font-size:15px;color:#111;letter-spacing:-0.255px;">Add Two Names Field...</span>
<span class="t" style="left:600.40px;top:639.30px;font-size:15px;color:#111;letter-spacing:-0.225px;">Auto Create Fields</span>
<span class="t" style="left:600.40px;top:669.30px;font-size:15px;color:#111;letter-spacing:-0.095px;">Auto Determine Field Names</span>
<span class="t" style="left:600.40px;top:699.30px;font-size:15px;color:#111;letter-spacing:-0.219px;">Auto Create Fields (Single-Instance) (Beta)</span>
<span class="t" style="left:600.40px;top:733.00px;font-size:15px;color:#111;letter-spacing:-0.044px;">Move all field markers left one character</span>
<span class="t" style="left:600.40px;top:763.00px;font-size:15px;color:#111;letter-spacing:-0.018px;">Move all field markers right one character</span>
<span class="t" style="left:600.40px;top:796.50px;font-size:15px;color:#111;letter-spacing:-0.330px;">Delete Region</span>
<span class="t" style="left:600.40px;top:826.50px;font-size:15px;color:#111;letter-spacing:-0.349px;">Clear Markers</span>
<span class="t" style="left:600.40px;top:860.00px;font-size:15px;color:#111;letter-spacing:-0.006px;">Copy</span>
<svg style="left:565.2px;top:517px;" width="17" height="19.5" viewBox="0 0 17 19.5"><rect x="0.9" y="0.9" width="15.2" height="17.6" rx="1.2" fill="#f6f8fa" stroke="#a4aab1" stroke-width="1.6"/><path d="M1.4 18.5H15A1.1 1.1 0 0 0 16.1 17.4V1.6" fill="none" stroke="#838a92" stroke-width="1.6"/><path d="M6.6 4.6h5.8M6.6 7.4h5.8" stroke="#6a86b8" stroke-width="1.4"/><path d="M3.8 4.6h1.4M3.8 7.4h1.4" stroke="#8fa6cc" stroke-width="1.2"/><path d="M3.6 12.4H9.4" stroke="#1faa3c" stroke-width="3.8"/><path d="M8.4 7.8L14.2 12.4L8.4 17Z" fill="#1faa3c"/><path d="M4.2 11.8H10.6" stroke="#5fe07a" stroke-width="1.2"/></svg>
<svg style="left:565.2px;top:547px;" width="17" height="19.5" viewBox="0 0 17 19.5"><rect x="0.9" y="0.9" width="15.2" height="17.6" rx="1.2" fill="#f6f8fa" stroke="#a4aab1" stroke-width="1.6"/><path d="M1.4 18.5H15A1.1 1.1 0 0 0 16.1 17.4V1.6" fill="none" stroke="#838a92" stroke-width="1.6"/><path d="M6.6 4.6h5.8M6.6 7.4h5.8" stroke="#6a86b8" stroke-width="1.4"/><path d="M3.8 4.6h1.4M3.8 7.4h1.4" stroke="#8fa6cc" stroke-width="1.2"/><path d="M3.6 12.4H9.4" stroke="#1faa3c" stroke-width="3.8"/><path d="M8.4 7.8L14.2 12.4L8.4 17Z" fill="#1faa3c"/><path d="M4.2 11.8H10.6" stroke="#5fe07a" stroke-width="1.2"/></svg>
<svg style="left:565.2px;top:577px;" width="17" height="19.5" viewBox="0 0 17 19.5"><rect x="0.9" y="0.9" width="15.2" height="17.6" rx="1.2" fill="#f6f8fa" stroke="#a4aab1" stroke-width="1.6"/><path d="M1.4 18.5H15A1.1 1.1 0 0 0 16.1 17.4V1.6" fill="none" stroke="#838a92" stroke-width="1.6"/><path d="M6.6 4.6h5.8M6.6 7.4h5.8" stroke="#6a86b8" stroke-width="1.4"/><path d="M3.8 4.6h1.4M3.8 7.4h1.4" stroke="#8fa6cc" stroke-width="1.2"/><path d="M3.6 12.4H9.4" stroke="#1faa3c" stroke-width="3.8"/><path d="M8.4 7.8L14.2 12.4L8.4 17Z" fill="#1faa3c"/><path d="M4.2 11.8H10.6" stroke="#5fe07a" stroke-width="1.2"/></svg>
<svg style="left:565.2px;top:607px;" width="17" height="19.5" viewBox="0 0 17 19.5"><rect x="0.9" y="0.9" width="15.2" height="17.6" rx="1.2" fill="#f6f8fa" stroke="#a4aab1" stroke-width="1.6"/><path d="M1.4 18.5H15A1.1 1.1 0 0 0 16.1 17.4V1.6" fill="none" stroke="#838a92" stroke-width="1.6"/><path d="M6.6 4.6h5.8M6.6 7.4h5.8" stroke="#6a86b8" stroke-width="1.4"/><path d="M3.8 4.6h1.4M3.8 7.4h1.4" stroke="#8fa6cc" stroke-width="1.2"/><path d="M3.6 12.4H9.4" stroke="#1faa3c" stroke-width="3.8"/><path d="M8.4 7.8L14.2 12.4L8.4 17Z" fill="#1faa3c"/><path d="M4.2 11.8H10.6" stroke="#5fe07a" stroke-width="1.2"/></svg>
<svg style="left:562.2px;top:639.2px;" width="24" height="18" viewBox="0 0 24 18"><path d="M8 11H1.2V1.2H22.8V11H17" stroke="#2b8ce0" stroke-width="2.3" fill="none"/><path d="M13.2 3.6H18.6L15 8.4H17.6L9 17.8L11.6 11H8.2Z" fill="#f5981d"/></svg>
<svg style="left:563px;top:668px;" width="23" height="19" viewBox="0 0 23 19"><rect x="0" y="0" width="7.6" height="5.3" fill="#f5981d"/><rect x="0" y="6.7" width="7.6" height="5.3" fill="#f5981d"/><rect x="0" y="13.4" width="7.6" height="5.3" fill="#f5981d"/><path d="M8 9.35H11.4" stroke="#f5981d" stroke-width="1.5"/><path d="M10.8 6.9L13.9 9.35L10.8 11.8Z" fill="#f5981d"/><rect x="14.6" y="6.5" width="8" height="5.6" fill="#2b8ce0"/></svg>
<svg style="left:562px;top:700px;" width="25" height="17" viewBox="0 0 25 17"><path d="M9.5 11H1.1V1.1H23.9V11H18" stroke="#f5981d" stroke-width="2.1" fill="none"/><rect x="0" y="0" width="8.8" height="12.1" fill="#f5981d"/><path d="M3 5.6H10" stroke="#111" stroke-width="1.5"/><path d="M2 5.6L4.4 3.6V7.6ZM11 5.6L8.6 3.6V7.6Z" fill="#111"/><path d="M14.6 4H19.6L16.4 8.2H18.8L11.2 16.4L13.4 10.4H10.2Z" fill="#2b8ce0"/></svg>
<svg style="left:563px;top:732px;" width="22" height="17.5" viewBox="0 0 22 17.5"><path d="M0.6 0.8H12.6L6.6 8.75L12.6 16.7H0.6Z" fill="#f5981d"/><rect x="0.6" y="0.6" width="20.8" height="16.3" fill="none" stroke="#2b8ce0" stroke-width="1" stroke-dasharray="1.6 1.4"/><path d="M11 8.75H18.6" stroke="#2b8ce0" stroke-width="2.3" fill="none"/><path d="M8.2 8.75L12.6 5.2V12.3Z" fill="#2b8ce0"/></svg>
<svg style="left:563px;top:762px;" width="22" height="17.5" viewBox="0 0 22 17.5"><path d="M21.4 0.8H9.4L15.4 8.75L9.4 16.7H21.4Z" fill="#f5981d"/><rect x="0.6" y="0.6" width="20.8" height="16.3" fill="none" stroke="#2b8ce0" stroke-width="1" stroke-dasharray="1.6 1.4"/><path d="M3.4 8.75H11" stroke="#2b8ce0" stroke-width="2.3" fill="none"/><path d="M13.8 8.75L9.4 5.2V12.3Z" fill="#2b8ce0"/></svg>
<svg style="left:563.5px;top:794px;" width="22" height="22" viewBox="0 0 22 22"><path d="M2.6 2.6L19.4 19.4M19.4 2.6L2.6 19.4" stroke="#cb4b2e" stroke-width="5.2" fill="none"/></svg>
<svg style="left:564.5px;top:826px;" width="21" height="17" viewBox="0 0 21 17"><path d="M1 15.6H14" stroke="#7d86c8" stroke-width="1.2"/><g transform="rotate(-28 10.5 8)"><rect x="2.4" y="4" width="17" height="8.6" rx="2.6" fill="#f8f8fb" stroke="#c9ccd6" stroke-width="0.8"/><path d="M10.4 4H16.8A2.6 2.6 0 0 1 19.4 6.6V10A2.6 2.6 0 0 1 16.8 12.6H10.4Z" fill="#e8506a"/><path d="M10.4 4.6H16.6A2 2 0 0 1 18.6 6.4H10.4Z" fill="#f59aa8"/></g></svg>
<svg style="left:563.3px;top:857px;" width="22" height="23" viewBox="0 0 22 23"><path d="M1 0.8H9.5L12.6 4V14.4H1Z" fill="#fbfcfd" stroke="#8a8f96" stroke-width="1.3"/><path d="M3 4.2h6M3 6.8h7.6M3 9.4h7.6M3 12h7.6" stroke="#4a78c0" stroke-width="1.3"/><path d="M8.6 8.6H17L20.6 12.2V22.2H8.6Z" fill="#fbfcfd" stroke="#70757c" stroke-width="1.4"/><path d="M17 8.6V12.2H20.6" fill="none" stroke="#70757c" stroke-width="1.1"/><path d="M10.8 13.6h7.6M10.8 16h7.6M10.8 18.4h7.6M10.8 20.4h7.6" stroke="#4a78c0" stroke-width="1.3"/></svg>
</div></body></html>
